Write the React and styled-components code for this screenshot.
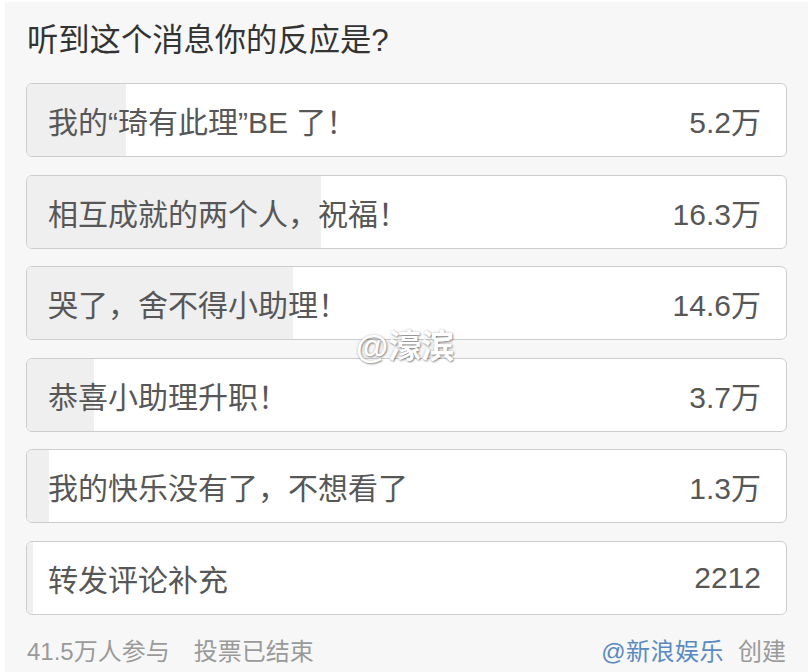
import React from "react";
import styled, { createGlobalStyle } from "styled-components";

const OPTIONS = [
  { label: "我的“琦有此理”BE 了！", count: "5.2万", pct: 13 },
  { label: "相互成就的两个人，祝福！", count: "16.3万", pct: 38.8 },
  { label: "哭了，舍不得小助理！", count: "14.6万", pct: 35 },
  { label: "恭喜小助理升职！", count: "3.7万", pct: 8.8 },
  { label: "我的快乐没有了，不想看了", count: "1.3万", pct: 2.9 },
  { label: "转发评论补充", count: "2212", pct: 0.8 },
];

const GlobalStyle = createGlobalStyle`
  html, body {
    margin: 0;
    padding: 0;
    background: #ffffff;
  }
  * {
    box-sizing: border-box;
  }
`;

const App = () => {
  return (
    <>
      <GlobalStyle />
      <Card>
        <Title>听到这个消息你的反应是?</Title>
        <OptionList>
          {OPTIONS.map((opt, idx) => (
            <Option key={`${opt.label}+${idx}`} {...opt} />
          ))}
        </OptionList>
        <Footer>
          <Meta>
            <span>41.5万人参与</span>
            <span>投票已结束</span>
          </Meta>
          <Creator>
            <Author>@新浪娱乐</Author>
            <span>创建</span>
          </Creator>
        </Footer>
        <Watermark>@濠滨</Watermark>
      </Card>
    </>
  );
};

const Option = ({ label, count, pct }) => (
  <Row>
    <Fill style={{ width: `${pct}%` }} />
    <Label>{label}</Label>
    <Count>{count}</Count>
  </Row>
);

const Card = styled.section`
  position: relative;
  margin: 2px 4px 0 5px;
  height: 670px;
  background: #f7f7f7;
  padding: 20px 21px 0 21px;
  font-family: "Liberation Sans", "Noto Sans CJK SC", sans-serif;
`;

const Title = styled.h1`
  margin: 0;
  padding-left: 1px;
  font-size: 31.3px;
  font-weight: normal;
  line-height: 38px;
  color: #333;
`;

const OptionList = styled.ul`
  list-style: none;
  margin: 23px 0 0;
  padding: 0;
  display: flex;
  flex-direction: column;
  gap: 17.6px;
`;

const Row = styled.li`
  position: relative;
  height: 74px;
  display: flex;
  align-items: center;
  justify-content: space-between;
  padding: 0 25px 0 21px;
  background: #fff;
  border: 1px solid #cdcdcd;
  border-radius: 6px;
  overflow: hidden;
  color: #575757;
  font-size: 30px;
`;

const Fill = styled.div`
  position: absolute;
  left: 0;
  top: 0;
  bottom: 0;
  background: #efefef;
`;

const Label = styled.span`
  position: relative;
`;

const Count = styled.span`
  position: relative;
`;

const Footer = styled.footer`
  margin-top: 21px;
  display: flex;
  justify-content: space-between;
  align-items: center;
  font-size: 24px;
  line-height: 32px;
  color: #9a9a9a;
  padding-left: 1px;
`;

const Meta = styled.div`
  display: flex;
  gap: 24px;
`;

const Creator = styled.div`
  display: flex;
  gap: 14px;
  padding-right: 1px;
`;

const Author = styled.span`
  color: #5b8ac0;
  letter-spacing: 0.5px;
`;

const Watermark = styled.div`
  position: absolute;
  left: 351px;
  top: 318px;
  font-size: 33px;
  font-weight: bold;
  color: #fff;
  text-shadow: 1px 1px 2px rgba(0, 0, 0, 0.4), 0 0 3px rgba(0, 0, 0, 0.2);
`;

export default App;
